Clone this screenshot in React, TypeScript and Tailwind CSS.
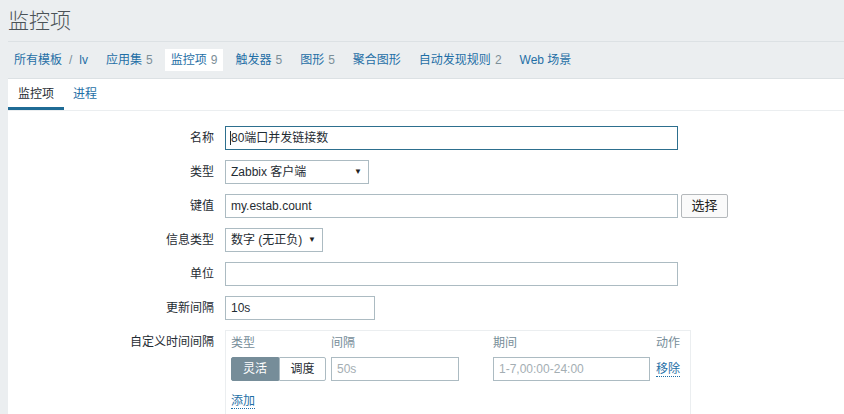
import React from "react";

const navItems = [
  { label: "应用集", count: "5" },
  { label: "监控项", count: "9", active: true },
  { label: "触发器", count: "5" },
  { label: "图形", count: "5" },
  { label: "聚合图形" },
  { label: "自动发现规则", count: "2" },
  { label: "Web 场景" },
];

function Label({ children, top }: { children: React.ReactNode; top?: boolean }) {
  return (
    <div
      className={
        top
          ? "text-right pt-[5px] leading-[14px]"
          : "flex items-center justify-end h-[24px] leading-[14px]"
      }
    >
      {children}
    </div>
  );
}

function Select({ text, width }: { text: string; width: string }) {
  return (
    <div
      className={`${width} h-[24px] flex items-center justify-between border border-[#acbbc2] bg-white pl-[5px] pr-[6px]`}
    >
      <span>{text}</span>
      <span className="text-[8px] text-[#222]">▼</span>
    </div>
  );
}

export default function App() {
  return (
    <div className="min-h-screen overflow-hidden bg-[#ebeef0] font-['Liberation_Sans','Noto_Sans_CJK_SC',sans-serif] text-[12px] text-[#1f2c33]">
      <div className="ml-2">
        {/* title */}
        <div className="h-[42px] flex items-center border-b border-[#dce1e4]">
          <h1 className="text-[21px] leading-none text-[#4b5357] font-light">监控项</h1>
        </div>

        {/* breadcrumbs / nav */}
        <nav className="h-[37px] flex items-center gap-[6px] border-b border-[#dce1e4]">
          <div className="flex items-center px-[6px] leading-[14px]">
            <span className="text-[#1f6fa6]">所有模板</span>
            <span className="mx-[7px] text-[#7c8e98]">/</span>
            <span className="text-[#1f6fa6]">lv</span>
          </div>
          {navItems.map((item) => (
            <div
              key={item.label}
              className={
                item.active
                  ? "h-[22px] flex items-center px-[6px] bg-white leading-[14px]"
                  : "h-[22px] flex items-center px-[6px] leading-[14px]"
              }
            >
              <span className="text-[#1f6fa6]">{item.label}</span>
              {item.count && <span className="ml-[4px] text-[#7c8e98]">{item.count}</span>}
            </div>
          ))}
        </nav>

        <div className="bg-white">
          {/* tabs */}
          <div className="flex border-b border-[#ebeef0]">
            <div className="px-[10px] pt-[8px] pb-[6px] leading-[14px] border-b-[3px] border-[#1f6b95] text-[#1f2c33]">
              监控项
            </div>
            <div className="px-[9px] pt-[8px] pb-[6px] leading-[14px] border-b-[3px] border-transparent text-[#1f6fa6]">
              进程
            </div>
          </div>

          {/* form */}
          <div className="grid grid-cols-[206px_1fr] gap-x-[11px] gap-y-[10px] pt-[15px] pb-[20px]">
            <Label>名称</Label>
            <div className="w-[453px] h-[24px] flex items-center border border-[#2d6f8e] pl-[4px]">
              <span className="w-px h-[14px] bg-[#1f2c33]" />
              <span>80端口并发链接数</span>
            </div>

            <Label>类型</Label>
            <Select text="Zabbix 客户端" width="w-[144px]" />

            <Label>键值</Label>
            <div className="flex items-center gap-[3px]">
              <div className="w-[453px] h-[24px] flex items-center border border-[#acbbc2] pl-[5px]">
                my.estab.count
              </div>
              <button className="w-[47px] h-[24px] border border-[#b4b8bb] rounded-[2px] bg-[#fafafa] text-[13px] text-[#222]">
                选择
              </button>
            </div>

            <Label>信息类型</Label>
            <Select text="数字 (无正负)" width="w-[98px]" />

            <Label>单位</Label>
            <div className="w-[453px] h-[24px] border border-[#acbbc2]" />

            <Label>更新间隔</Label>
            <div className="w-[150px] h-[24px] flex items-center border border-[#acbbc2] pl-[5px]">10s</div>

            <Label top>自定义时间间隔</Label>
            <div className="w-[466px] border border-[#ebeef0] px-[5px] pt-[5px] pb-[12px]">
              <div className="flex leading-[14px] text-[#768d99]">
                <div className="w-[100px]">类型</div>
                <div className="w-[162px]">间隔</div>
                <div className="w-[163px]">期间</div>
                <div>动作</div>
              </div>
              <div className="flex items-center mt-[7px] h-[24px]">
                <div className="w-[100px] flex">
                  <div className="w-[48px] h-[24px] flex items-center justify-center bg-[#768d99] border border-[#768d99] text-white rounded-l-[2px]">
                    灵活
                  </div>
                  <div className="w-[47px] h-[24px] flex items-center justify-center bg-white border border-[#acbbc2] rounded-r-[2px]">
                    调度
                  </div>
                </div>
                <div className="w-[162px]">
                  <div className="w-[128px] h-[24px] flex items-center border border-[#acbbc2] pl-[5px] text-[#a4aeb3]">
                    50s
                  </div>
                </div>
                <div className="w-[163px]">
                  <div className="w-[157px] h-[24px] flex items-center border border-[#acbbc2] pl-[5px] text-[#a4aeb3]">
                    1-7,00:00-24:00
                  </div>
                </div>
                <span className="text-[#1f6fa6] border-b border-dotted border-[#1f6fa6] leading-[14px]">移除</span>
              </div>
              <div className="mt-[11px]">
                <span className="text-[#1f6fa6] border-b border-dotted border-[#1f6fa6] leading-[14px]">添加</span>
              </div>
            </div>
          </div>
        </div>
      </div>
    </div>
  );
}
